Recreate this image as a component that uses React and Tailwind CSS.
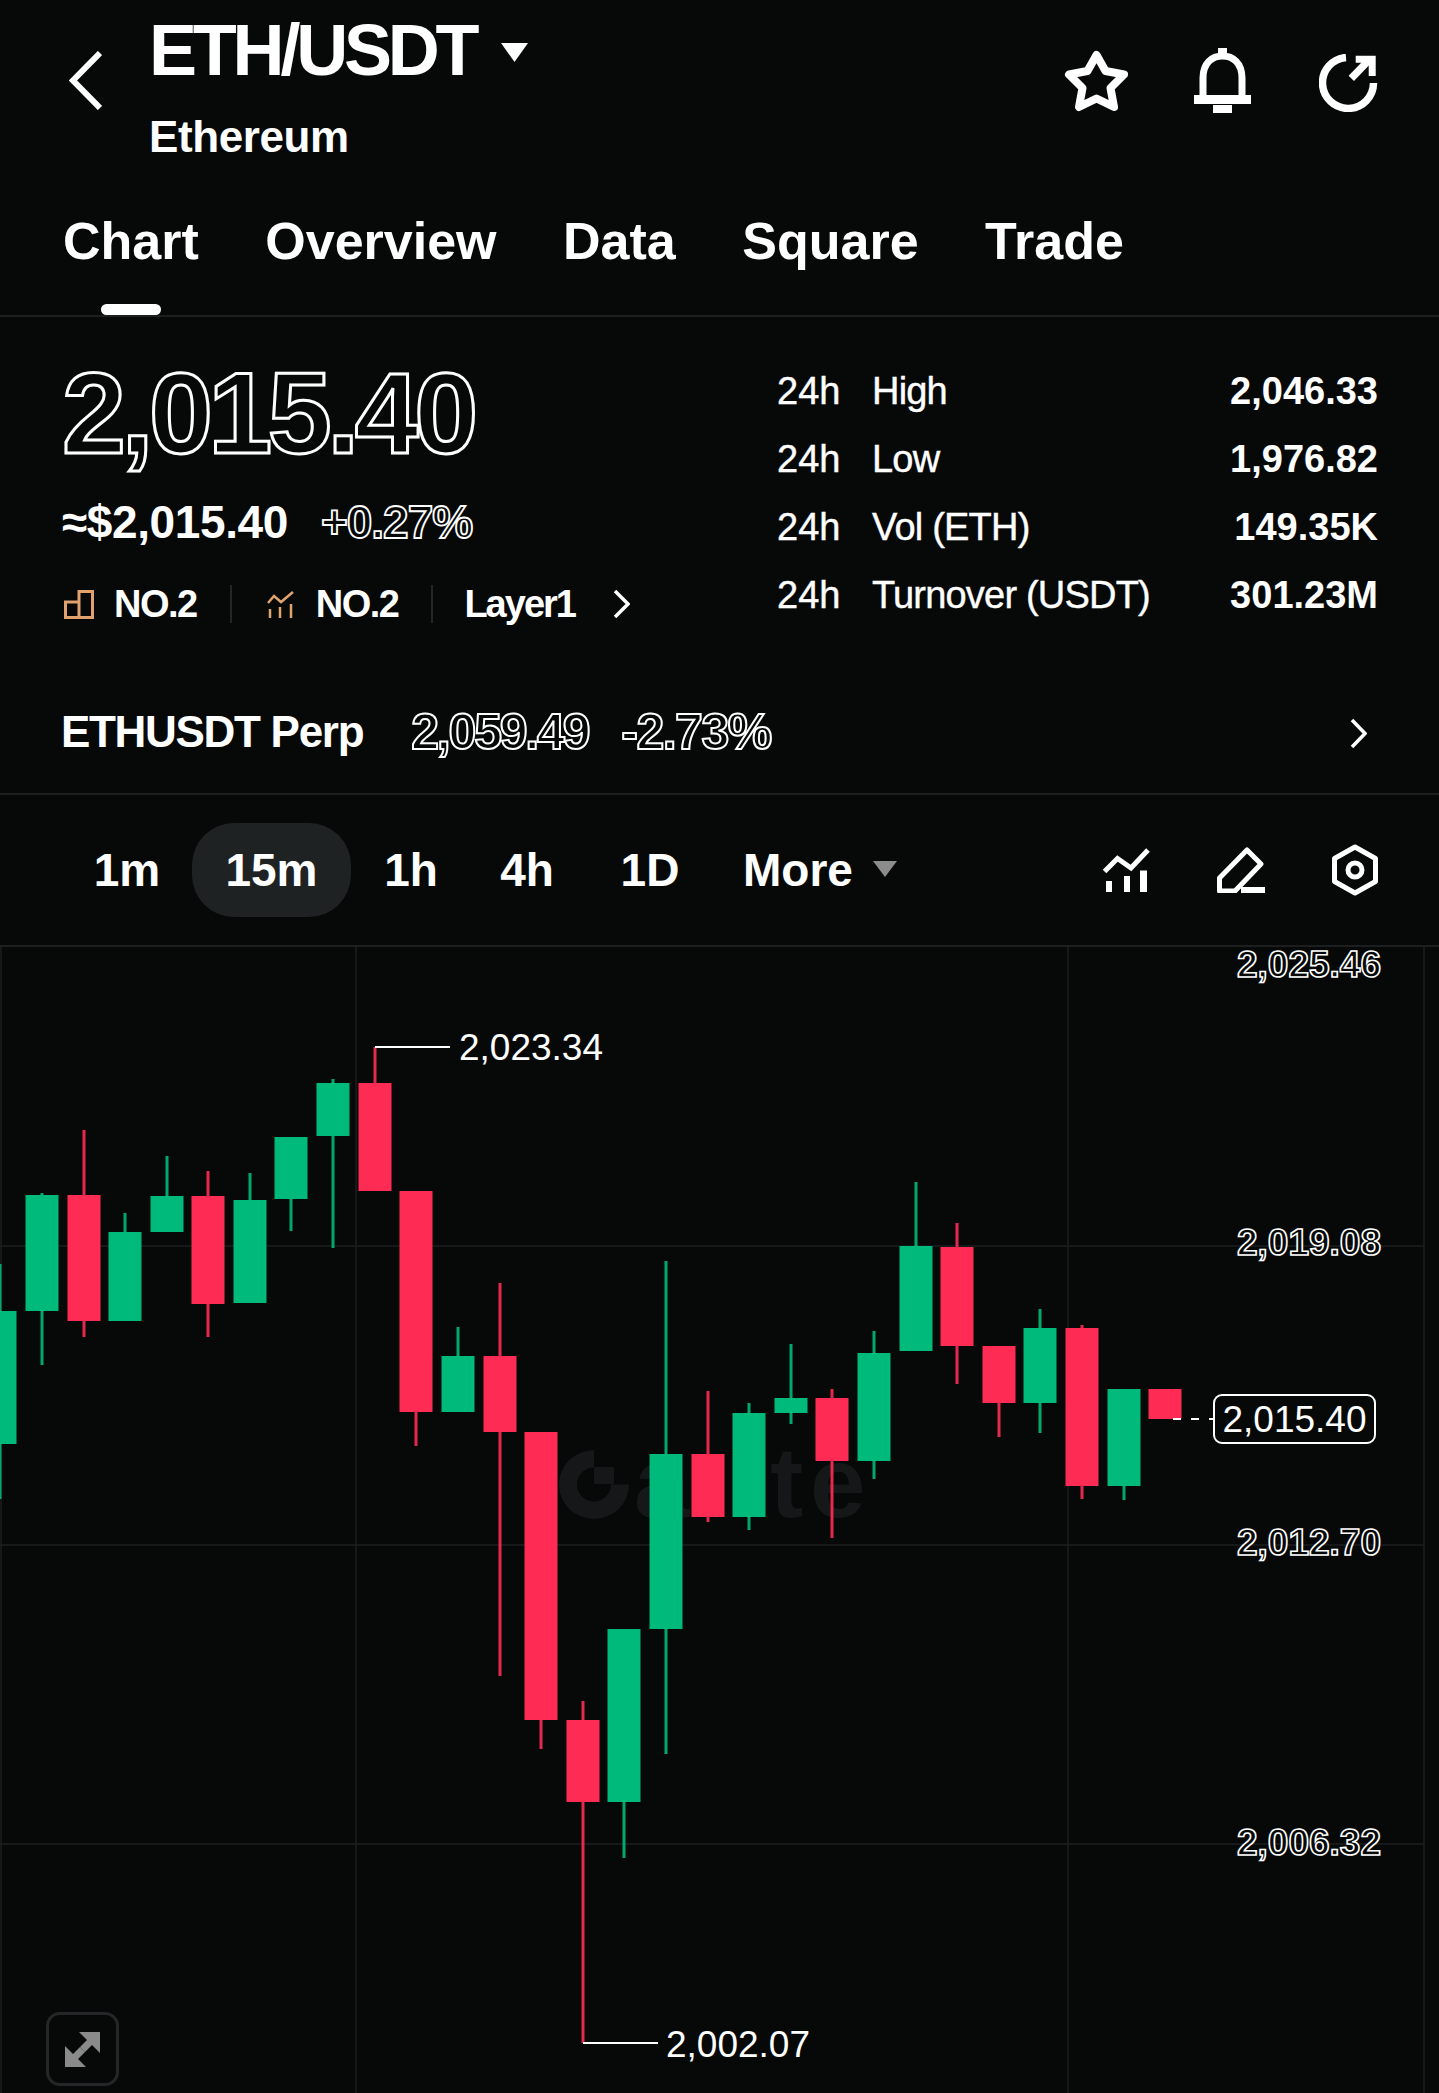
import React from 'react'

const UP = '#00ba7c'
const DOWN = '#fe2c55'

// x, wick top, body top, body bottom, wick bottom, colour (page pixels)
const candles = [
    [0, 1264, 1311, 1444, 1499, UP],
    [42, 1193, 1195, 1311, 1365, UP],
    [84, 1130, 1195, 1321, 1337, DOWN],
    [125, 1213, 1232, 1321, 1321, UP],
    [167, 1156, 1196, 1232, 1232, UP],
    [208, 1171, 1196, 1304, 1337, DOWN],
    [250, 1173, 1200, 1303, 1303, UP],
    [291, 1137, 1137, 1199, 1231, UP],
    [333, 1079, 1083, 1136, 1248, UP],
    [375, 1047, 1083, 1191, 1191, DOWN],
    [416, 1191, 1191, 1412, 1446, DOWN],
    [458, 1327, 1356, 1412, 1412, UP],
    [500, 1283, 1356, 1432, 1676, DOWN],
    [541, 1432, 1432, 1720, 1749, DOWN],
    [583, 1701, 1720, 1802, 2043, DOWN],
    [624, 1629, 1629, 1802, 1858, UP],
    [666, 1261, 1454, 1629, 1754, UP],
    [708, 1391, 1454, 1517, 1522, DOWN],
    [749, 1403, 1413, 1517, 1530, UP],
    [791, 1344, 1398, 1413, 1424, UP],
    [832, 1389, 1398, 1461, 1538, DOWN],
    [874, 1331, 1353, 1461, 1479, UP],
    [916, 1182, 1246, 1351, 1351, UP],
    [957, 1223, 1247, 1346, 1384, DOWN],
    [999, 1346, 1346, 1403, 1437, DOWN],
    [1040, 1309, 1328, 1403, 1433, UP],
    [1082, 1325, 1328, 1486, 1499, DOWN],
    [1124, 1389, 1389, 1486, 1500, UP],
    [1165, 1389, 1389, 1419, 1419, DOWN],
]

const stats = [
    ['High', '2,046.33'],
    ['Low', '1,976.82'],
    ['Vol (ETH)', '149.35K'],
    ['Turnover (USDT)', '301.23M'],
]

const tabs = ['Chart', 'Overview', 'Data', 'Square', 'Trade']

const CandleChart = () => (
    <svg className="absolute inset-0" width="1439" height="1146" viewBox="0 947 1439 1146">
        {/* grid */}
        <g stroke="#1c1e1f" strokeWidth="1.500">
            <path d="M1 946V2093M356 946V2093M1068 946V2093M1424 946V2093" />
            <path d="M0 1246H1424M0 1545H1424M0 1844H1424" />
        </g>

        {/* watermark */}
        <g fill="#151718">
            <path d="M594 1450a35 34.500 0 1 0 35 34.500h-18a17 17 0 1 1 -17 -17z" />
            <rect x="594" y="1467" width="20" height="17" />
            <text x="634 770 810" y="1517" fontSize="100" fontWeight="700">ate</text>
        </g>

        {/* candles */}
        {candles.map(([x, wickTop, top, bottom, wickBottom, color]) => (
            <g key={x} fill={color}>
                <rect x={x - 1.5} y={wickTop} width="3" height={wickBottom - wickTop} opacity="0.9" />
                <rect x={x - 16.500} y={top} width="33" height={bottom - top} />
            </g>
        ))}

        {/* high / low markers */}
        <path d="M375 1047H450M583 2043H658" stroke="#fff" strokeWidth="2" />
        <path d="M1173 1419H1213" stroke="#fff" strokeWidth="2" strokeDasharray="8 10" />
    </svg>
)

const AxisLabel = ({ className, children }) => (
    <span className={`absolute right-[58px] text-[37px] leading-[40px] font-bold text-[#060908] [-webkit-text-stroke:1.600px_white] ${className}`}>
        {children}
    </span>
)

const App = () => {
    return (
        <div className="w-[1439px] h-[2093px] overflow-hidden bg-[#060908] text-white font-['Liberation_Sans',Arial,sans-serif]">

            {/* header */}
            <header className="h-[317px] border-b-2 border-[#1c1e1f]">
                <div className="flex h-[211px] pt-[14px] pr-[61px]">
                    <svg className="mt-[37px] ml-[69px]" width="33" height="59" viewBox="0 0 33 59" fill="none" stroke="#fff" strokeWidth="6">
                        <path d="M31 2L4 29.500L31 57" />
                    </svg>
                    <div className="ml-[47px]">
                        <div className="flex">
                            <h1 className="text-[72px] leading-[72px] font-bold tracking-[-4.200px]">ETH/USDT</h1>
                            <svg className="mt-[28px] ml-[25px]" width="29" height="20" viewBox="0 0 29 20" fill="#fff">
                                <path d="M1 1H28L14.500 20z" />
                            </svg>
                        </div>
                        <p className="mt-[29px] text-[44px] leading-[44px] font-bold tracking-[-0.400px]">Ethereum</p>
                    </div>
                    <div className="ml-auto flex items-start">
                        <svg className="mt-[36px]" width="65" height="62" viewBox="0 0 65 62" fill="none" stroke="#fff" strokeWidth="8" strokeLinejoin="round">
                            <path d="M32.500 5L41.500 21L60 24.500L46.500 38L50 57L32.500 48.500L15 57L18.500 38L5 24.500L23.500 21z" />
                        </svg>
                        <svg className="mt-[34px] ml-[65px]" width="57" height="65" viewBox="0 0 57 65" fill="#fff">
                            <path d="M24 0H33V9H24z" />
                            <path d="M9 50V30C9 15 18 8 28.500 8C39 8 48 15 48 30V50" fill="none" stroke="#fff" strokeWidth="7" />
                            <path d="M0 47H57V56H0z" />
                            <path d="M19 57H38V65H19z" />
                        </svg>
                        <svg className="mt-[40px] ml-[68px]" width="59" height="58" viewBox="0 0 59 58" fill="none" stroke="#fff" strokeWidth="7.500">
                            <path d="M27 3.500A25.500 25.500 0 1 0 54.500 29" />
                            <path d="M32.300 24.300L50 6" />
                            <path d="M36.700 1.700H56.700V22H49.700V8.700H36.700z" fill="#fff" stroke="none" />
                        </svg>
                    </div>
                </div>
                <nav className="flex gap-[66.500px] pl-[63px] text-[52px] leading-[60px] font-bold">
                    {tabs.map(tab => <span key={tab}>{tab}</span>)}
                </nav>
                <div className="mt-[33px] ml-[101px] h-[11px] w-[60px] rounded-full bg-white"></div>
            </header>

            {/* price summary */}
            <section className="flex h-[385px] pl-[62px] pr-[61px]">
                <div>
                    <div className="mt-[46px] text-[115px] leading-[100px] font-bold tracking-[-4.500px] text-[#060908] [-webkit-text-stroke:3px_white]">2,015.40</div>
                    <div className="mt-[34px] flex h-[50px] items-center text-[46px] leading-[50px] font-bold">
                        <span className="tracking-[-0.400px]">≈$2,015.40</span>
                        <span className="ml-[33px] tracking-[-1px] text-[#060908] [-webkit-text-stroke:1.800px_white]">+0.27%</span>
                    </div>
                    <div className="mt-[37px] flex h-[40px] items-center text-[38px] leading-[40px] font-bold">
                        <svg className="ml-[2px]" width="30" height="29" viewBox="0 0 30 29" fill="none" stroke="#e2a26e" strokeWidth="3">
                            <path d="M1.500 12H15V27.500H1.500zM15 1.500H28.500V27.500H15z" />
                        </svg>
                        <span className="ml-[20px] tracking-[-1.500px]">NO.2</span>
                        <span className="ml-[33px] h-[38px] w-[2px] bg-[#232526]"></span>
                        <svg className="ml-[35px]" width="27" height="27" viewBox="0 0 27 27" fill="none" stroke="#e2a26e" strokeWidth="2.500">
                            <path d="M1 12L7 5L14 11L26 1" />
                            <path d="M3 18V27M13 16V27M24 13V27" />
                        </svg>
                        <span className="ml-[22px] tracking-[-1.500px]">NO.2</span>
                        <span className="ml-[33px] h-[38px] w-[2px] bg-[#232526]"></span>
                        <span className="ml-[31px] tracking-[-2px]">Layer1</span>
                        <svg className="ml-[38px]" width="17" height="28" viewBox="0 0 17 28" fill="none" stroke="#fff" strokeWidth="3.500">
                            <path d="M2 1L15 14L2 27" />
                        </svg>
                    </div>
                </div>
                <dl className="ml-auto mt-[40px] w-[601px] text-[38px] leading-[68px] [-webkit-text-stroke:0.400px_white]">
                    {stats.map(([label, value]) => (
                        <div key={label} className="flex">
                            <dt className="w-[95px]">24h</dt>
                            <dt className="tracking-[-0.800px]">{label}</dt>
                            <dd className="ml-auto font-bold [-webkit-text-stroke:0]">{value}</dd>
                        </div>
                    ))}
                </dl>
            </section>

            {/* perp row */}
            <div className="flex h-[93px] items-start pl-[61px] pr-[72px] border-b-2 border-[#1c1e1f]">
                <div className="flex h-[60px] items-center font-bold">
                    <span className="text-[44px] tracking-[-1.300px]">ETHUSDT Perp</span>
                    <span className="ml-[48px] text-[50px] tracking-[-2.200px] text-[#060908] [-webkit-text-stroke:2px_white]">2,059.49</span>
                    <span className="ml-[33px] text-[50px] tracking-[-1.500px] text-[#060908] [-webkit-text-stroke:2px_white]">-2.73%</span>
                </div>
                <svg className="ml-auto mt-[16px]" width="17" height="31" viewBox="0 0 17 31" fill="none" stroke="#fff" strokeWidth="3.500">
                    <path d="M2 2L15 15.500L2 29" />
                </svg>
            </div>

            {/* toolbar */}
            <div className="flex h-[152px] items-center pl-[62px] pr-[61px] border-b-2 border-[#1c1e1f] text-[46px] font-bold">
                <span className="w-[130px] text-center">1m</span>
                <span className="flex h-[94px] w-[159px] items-center justify-center rounded-[42px] bg-[#1f2222]">15m</span>
                <span className="w-[120px] text-center">1h</span>
                <span className="w-[112px] text-center">4h</span>
                <span className="w-[134px] text-center">1D</span>
                <span className="ml-[26px]">More</span>
                <svg className="ml-[20px] mt-[-2px]" width="24" height="16" viewBox="0 0 24 16" fill="#8c8c8c">
                    <path d="M0 0H24L12 16z" />
                </svg>
                <div className="ml-auto flex items-center">
                    <svg width="47" height="44" viewBox="0 0 47 44" fill="none" stroke="#fff" strokeWidth="5">
                        <path d="M1.500 23.500L14.500 10.500L28 20L45 2" />
                        <path fill="#fff" stroke="none" d="M3 33H9V44H3zM21 28H27V44H21zM37 22.500H44V44H37z" />
                    </svg>
                    <svg className="ml-[67px]" width="48" height="46" viewBox="0 0 48 46" fill="none" stroke="#fff" strokeWidth="5" strokeLinejoin="round">
                        <path d="M30 3L44 17L18 44H2.500V31z" />
                        <path fill="#fff" stroke="none" d="M24 40H48V46H24z" />
                    </svg>
                    <svg className="ml-[67px]" width="46" height="52" viewBox="0 0 46 52" fill="none" stroke="#fff" strokeWidth="5" strokeLinejoin="round">
                        <path d="M23 3L43.500 14.500V37.500L23 49L2.500 37.500V14.500z" />
                        <circle cx="23" cy="26" r="7" />
                    </svg>
                </div>
            </div>

            {/* chart */}
            <div className="relative h-[1146px]">
                <CandleChart />

                <AxisLabel className="top-[-2px]">2,025.46</AxisLabel>
                <AxisLabel className="top-[276px]">2,019.08</AxisLabel>
                <AxisLabel className="top-[576px]">2,012.70</AxisLabel>
                <AxisLabel className="top-[876px]">2,006.32</AxisLabel>

                <span className="absolute left-[459px] top-[81px] text-[37px] leading-[40px]">2,023.34</span>
                <span className="absolute left-[666px] top-[1078px] text-[37px] leading-[40px]">2,002.07</span>

                <span className="absolute left-[1213px] top-[447px] flex h-[50px] w-[163px] items-center justify-center rounded-[9px] border-2 border-white bg-[#060908] pt-[1px] text-[37px]">2,015.40</span>

                <button className="absolute left-[46px] top-[1065px] flex h-[74px] w-[73px] items-center justify-center rounded-[14px] border-[3px] border-[#242627]">
                    <svg width="35" height="35" viewBox="0 0 35 35" fill="#8a8a8a">
                        <path d="M14 0H35V21L27 13L20 20L15 15L22 8z" />
                        <path d="M21 35H0V14L8 22L15 15L20 20L13 27z" />
                    </svg>
                </button>
            </div>
        </div>
    )
}

export default App
